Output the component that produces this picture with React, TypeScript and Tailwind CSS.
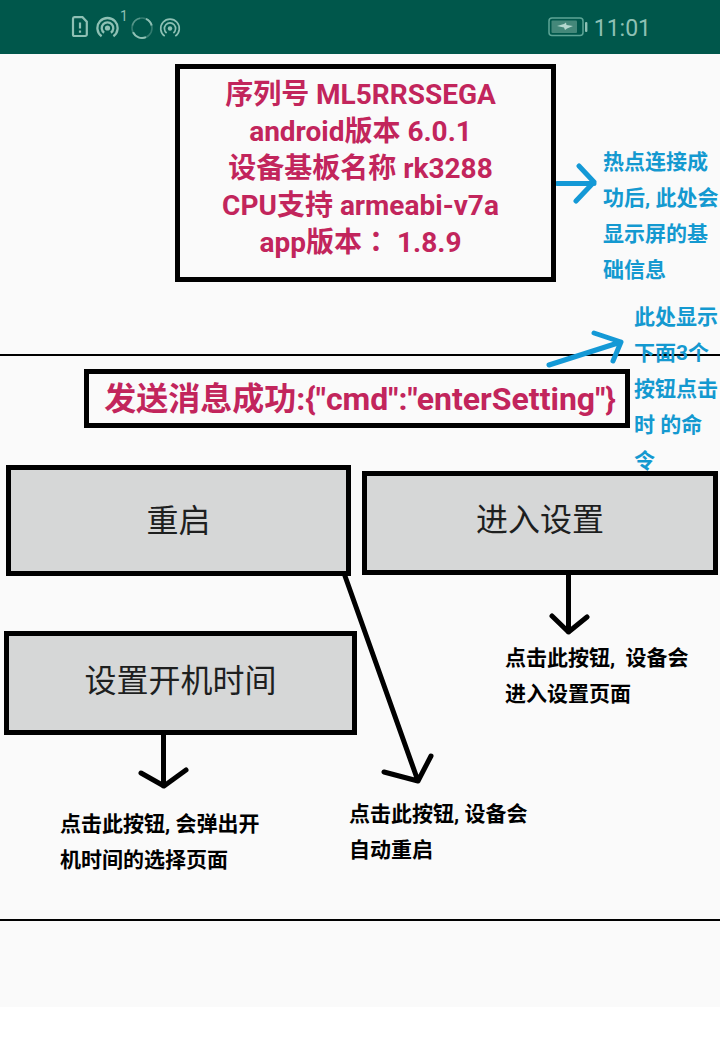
import type { ReactNode } from "react";

const deviceInfo: ReactNode[] = [
  "序列号 ML5RRSSEGA",
  "android版本 6.0.1",
  "设备基板名称 rk3288",
  "CPU支持 armeabi-v7a",
  <>
    app版本<span className="font-['Noto_Sans_CJK_TC',sans-serif] leading-none">：</span> 1.8.9
  </>,
];

function Note({ lines, className }: { lines: string[]; className: string }) {
  return (
    <p className={`text-[21px] leading-9 font-bold whitespace-nowrap ${className}`}>
      {lines.map((line) => (
        <span key={line} className="block whitespace-pre">
          {line}
        </span>
      ))}
    </p>
  );
}

function ActionButton({ children, className }: { children: ReactNode; className: string }) {
  return (
    <button
      type="button"
      className={`flex items-center justify-center border-[5px] border-black bg-[#d6d7d7] text-[32px] text-[#1e1f1f] ${className}`}
    >
      {children}
    </button>
  );
}

function StatusBar() {
  return (
    <header className="flex h-[54px] items-center bg-[#00574b] pl-[70px] pr-[69px] text-[#8ec0b4]">
      <svg width="20" height="24" viewBox="0 0 20 24" fill="none" stroke="currentColor" strokeWidth="2.2" aria-hidden="true">
        <path d="M4.5 2.2h8l4.3 4.6v12.6a1.6 1.6 0 0 1-1.6 1.6H4.6A1.6 1.6 0 0 1 3 19.400V3.800a1.600 1.600 0 0 1 1.500-1.600Z" />
        <path d="M10 7.500v6M10 15.500v2.300" />
      </svg>
      <svg className="ml-1.5" width="24" height="24" viewBox="0 0 24 24" fill="none" stroke="currentColor" strokeWidth="2.300" aria-hidden="true">
        <circle cx="11.500" cy="13" r="2.600" fill="currentColor" stroke="none" />
        <path d="M5.600 21.300a10.100 10.100 0 1 1 11.800 0" />
        <path d="M8.100 17.800a5.800 5.800 0 1 1 6.800 0" />
      </svg>
      <span className="self-start pt-2 text-[14px] leading-4">1</span>
      <svg className="ml-[2px]" width="24" height="24" viewBox="0 0 24 24" fill="none" stroke="currentColor" strokeWidth="1.600" aria-hidden="true">
        <circle cx="12" cy="13" r="10" opacity=".35" />
        <path d="M16 3.800a10 10 0 0 1 5.700 6.700M3 17.300A10 10 0 0 0 16 22.100" strokeWidth="2" />
        <path d="M2.300 10.500A10 10 0 0 1 10 3.200" opacity=".4" />
      </svg>
      <svg className="ml-1" width="24" height="24" viewBox="0 0 24 24" fill="none" stroke="currentColor" strokeWidth="1.700" aria-hidden="true">
        <circle cx="12" cy="13.500" r="2.200" fill="currentColor" stroke="none" />
        <path d="M6.700 21.100a9.300 9.300 0 1 1 10.600 0" />
        <path d="M8.600 18a5.600 5.600 0 1 1 6.800 0" />
      </svg>
      <svg className="ml-auto" width="40" height="20" viewBox="0 0 40 20" aria-hidden="true">
        <rect x="1" y="1" width="34" height="17.500" rx="3" fill="none" stroke="#5da596" strokeWidth="1.500" />
        <rect x="3.500" y="3.500" width="25.500" height="12.500" rx="1" fill="#44887a" />
        <path d="M9 9 16 7l2-1.500.5 2.500 6.500 1-6 2.500-2 1.500-1-2.500Z" fill="#b4d8cf" />
        <rect x="37" y="5" width="2.400" height="10" rx="1" fill="#8ec0b4" />
      </svg>
      <span className="ml-[6px] pt-[2px] text-[23px] leading-none">11:01</span>
    </header>
  );
}

export default function App() {
  return (
    <div className="min-h-screen bg-white font-['Roboto','Noto_Sans_CJK_SC',sans-serif] text-black">
      <StatusBar />
      <main className="bg-[#fafafa] pb-[86px]">
        <section className="flex items-start border-b-2 border-black pb-[66px] pl-[175px] pt-[10px]">
          <div className="h-[218px] flex-1 border-[5px] border-black pr-[10px] pt-[7px] text-center text-[28px] leading-[37px] font-bold text-[#c2255c]">
            {deviceInfo.map((line, i) => (
              <p key={i}>{line}</p>
            ))}
          </div>
          <svg className="mt-[98px] shrink-0" width="47" height="44" viewBox="0 0 47 44" fill="none" stroke="#1499d6" strokeWidth="5" strokeLinecap="round" strokeLinejoin="round" aria-hidden="true">
            <path d="M1 21.500H38M23 4 38 20 20 39" />
          </svg>
          <Note
            className="mt-20 w-[117px] shrink-0 text-[#1499d0]"
            lines={["热点连接成", "功后, 此处会", "显示屏的基", "础信息"]}
          />
        </section>

        <section className="relative border-b-2 border-black pb-[41px] pt-[13px]">
          <p className="ml-[84px] mr-[90px] flex h-[59px] items-center justify-center border-[5px] border-black pl-[6px] text-[32px] font-bold whitespace-nowrap text-[#c2255c]">
            发送消息成功:{'{"cmd":"enterSetting"}'}
          </p>
          <svg className="absolute -top-[26px] right-[92px]" width="84" height="42" viewBox="0 0 84 42" fill="none" stroke="#1499d6" strokeWidth="5" strokeLinecap="round" strokeLinejoin="round" aria-hidden="true">
            <path d="M5 35 77 12M50 3 77 12 69 31" />
          </svg>
          <Note
            className="absolute -top-[57px] right-0 w-[86px] text-[#1499d0]"
            lines={["此处显示", "下面3个", "按钮点击", "时 的命", "令"]}
          />

          <div className="mt-[37px] grid grid-cols-2">
            <div className="flex flex-col">
              <ActionButton className="ml-[6px] mr-[9px] h-[111px]">重启</ActionButton>
              <ActionButton className="ml-1 mr-[3px] mt-[55px] h-[104px] pb-1">设置开机时间</ActionButton>
              <svg className="ml-[136px]" width="56" height="56" viewBox="0 0 56 56" fill="none" stroke="black" strokeWidth="5" strokeLinecap="round" strokeLinejoin="round" aria-hidden="true">
                <path d="M27.500 0V51M5 38 28 51 50 35" />
              </svg>
              <Note className="ml-[60px] mt-[15px]" lines={["点击此按钮, 会弹出开", "机时间的选择页面"]} />
            </div>
            <div className="relative flex flex-col pt-[6px]">
              <ActionButton className="mx-[2px] h-[104px] pb-[6px]">进入设置</ActionButton>
              <svg className="ml-[186px]" width="48" height="62" viewBox="0 0 48 62" fill="none" stroke="black" strokeWidth="5" strokeLinecap="round" strokeLinejoin="round" aria-hidden="true">
                <path d="M22.500 0V57M6 41 22.500 57 41 42" />
              </svg>
              <Note className="ml-[145px] mt-[3px]" lines={["点击此按钮,  设备会", "进入设置页面"]} />
              <svg className="absolute -left-5 top-[110px]" width="96" height="214" viewBox="0 0 96 214" fill="none" stroke="black" strokeWidth="5" strokeLinecap="round" strokeLinejoin="round" aria-hidden="true">
                <path d="M5 1 78 206M44 197 78 206 91 181" />
              </svg>
              <Note className="-ml-[11px] mt-[84px]" lines={["点击此按钮, 设备会", "自动重启"]} />
            </div>
          </div>
        </section>
      </main>
    </div>
  );
}
